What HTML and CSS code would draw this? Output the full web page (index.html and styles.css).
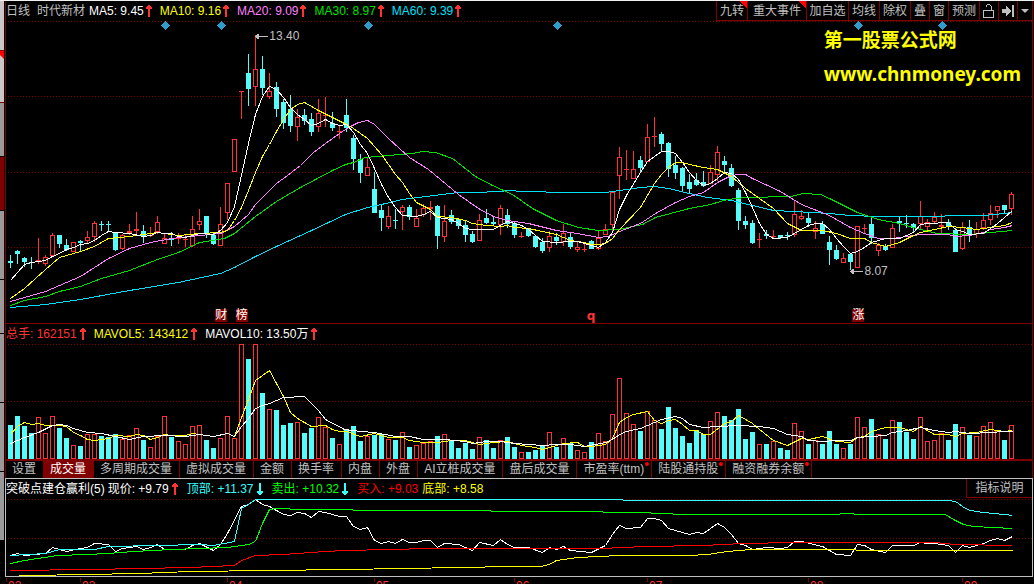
FILE: index.html
```html
<!DOCTYPE html>
<html lang="zh-CN">
<head>
<meta charset="utf-8">
<title>时代新材 日线</title>
<link rel="stylesheet" href="styles.css">
</head>
<body>
<svg class="defs" aria-hidden="true">
  <symbol id="up" viewBox="0 0 6 12"><path d="M2 0h2v1h1v1h1v2H4v8H2V4H0V2h1V1h1z" fill="currentColor"/></symbol>
  <symbol id="down" viewBox="0 0 6 12"><path d="M2 12h2v-1h1v-1h1V8H4V0H2v8H0v2h1v1h1z" fill="currentColor"/></symbol>
</svg>
<div class="app">
  <nav class="rail">
    <span class="rail-item light first"></span>
    <span class="rail-item light flagged"></span>
    <span class="rail-item"></span>
    <span class="rail-item current"></span>
    <span class="rail-item tall"></span>
    <span class="rail-item"></span>
    <span class="rail-item tall"></span>
    <span class="rail-item tall"></span>
    <span class="rail-item tall"></span>
  </nav>
  <main class="main">
    <section class="price">
      <header class="top">
        <div class="legend averages">
          <span class="muted period">日线</span>
          <span class="muted stock">时代新材</span>
          <span class="item white">MA5: 9.45<svg class="arrow rise"><use href="#up"/></svg></span>
          <span class="item yellow">MA10: 9.16<svg class="arrow rise"><use href="#up"/></svg></span>
          <span class="item pink">MA20: 9.09<svg class="arrow rise"><use href="#up"/></svg></span>
          <span class="item green">MA30: 8.97<svg class="arrow rise"><use href="#up"/></svg></span>
          <span class="item aqua">MA60: 9.39<svg class="arrow rise"><use href="#up"/></svg></span>
        </div>
        <div class="toolbar">
          <button class="tool c2 corner">九转</button>
          <button class="tool c4 corner">重大事件</button>
          <button class="tool c3">加自选</button>
          <button class="tool c2">均线</button>
          <button class="tool c2">除权</button>
          <button class="tool c1">叠</button>
          <button class="tool c1">窗</button>
          <button class="tool c2">预测</button>
          <button class="tool c1" aria-label="锁定"><svg width="12" height="14" viewBox="0 0 12 14" fill="none" stroke="#c0c0c0" shape-rendering="crispEdges"><path d="M.5 6.500h10v7H.5zM8.500 6V2.500L7.500 1.500L6.500 .5H5L3.500 1.500V3" /></svg></button>
          <button class="tool c1" aria-label="移到最新"><svg width="12" height="12" viewBox="0 0 12 12" fill="#c0c0c0" shape-rendering="crispEdges"><path d="M0 4h4V1h1v1h1v1h1v1h1v1h1v2H8v1H7v1H6v1H5v1H4V8H0zM10 0h2v12h-2z"/></svg></button>
          <button class="tool c0" aria-label="更多"><svg width="8" height="4" viewBox="0 0 8 4" fill="#c0c0c0"><path d="M0 0h8L4 4z"/></svg></button>
        </div>
      </header>
      <div class="plot">
        <svg id="price-chart" class="chart price-chart" viewBox="6 21 1026 302" preserveAspectRatio="none"></svg>
        <div class="watermark"><p>第一股票公式网</p><p>www.chnmoney.com</p></div>
        <div class="mark high"><svg width="13" height="7" viewBox="0 0 13 7" fill="#c0c0c0" shape-rendering="crispEdges"><path d="M0 3h1V2h1V1h2v2h9v1H4v2H2V5H1V4H0z"/></svg>13.40</div>
        <div class="mark low"><svg width="13" height="7" viewBox="0 0 13 7" fill="#c0c0c0" shape-rendering="crispEdges"><path d="M0 3h1V2h1V1h2v2h9v1H4v2H2V5H1V4H0z"/></svg>8.07</div>
        <span class="badge cai">财</span>
        <span class="badge bang">榜</span>
        <span class="letter">q</span>
        <span class="badge zhang">涨</span>
      </div>
    </section>
    <section class="volume">
      <div class="legend">
        <span class="item rise">总手: 162151<svg class="arrow rise"><use href="#up"/></svg></span>
        <span class="item yellow">MAVOL5: 143412<svg class="arrow rise"><use href="#up"/></svg></span>
        <span class="item white">MAVOL10: 13.50万<svg class="arrow rise"><use href="#up"/></svg></span>
      </div>
      <svg id="volume-chart" class="chart volume-chart" viewBox="6 344 1026 115" preserveAspectRatio="none"></svg>
      <nav class="tabs">
        <button class="tab">设置</button>
        <button class="tab active">成交量</button>
        <button class="tab">多周期成交量</button>
        <button class="tab">虚拟成交量</button>
        <button class="tab">金额</button>
        <button class="tab">换手率</button>
        <button class="tab">内盘</button>
        <button class="tab">外盘</button>
        <button class="tab">AI立桩成交量</button>
        <button class="tab">盘后成交量</button>
        <button class="tab dot">市盈率(ttm)</button>
        <button class="tab dot">陆股通持股</button>
        <button class="tab dot">融资融券余额</button>
      </nav>
    </section>
    <section class="signal">
      <header class="top">
        <div class="legend tight">
          <span class="white">突破点建仓赢利(5)</span>
          <span class="item white">现价: +9.79<svg class="arrow rise"><use href="#up"/></svg></span>
          <span class="item cyan">顶部: +11.37<svg class="arrow"><use href="#down"/></svg></span>
          <span class="item lime">卖出: +10.32<svg class="arrow cyan"><use href="#down"/></svg></span>
          <span class="item red">买入: +9.03</span>
          <span class="yellow">底部: +8.58</span>
        </div>
        <button class="explain">指标说明</button>
      </header>
      <svg id="signal-chart" class="chart signal-chart" viewBox="6 498 1026 78" preserveAspectRatio="none"></svg>
    </section>
    <div id="axis" class="axis"></div>
  </main>
</div>
<script src="charts.js"></script>
</body>
</html>
```
FILE: styles.css
```css
* { box-sizing: border-box; }
body {
  margin: 0;
  height: 100vh;
  overflow: hidden;
  background: #000;
  color: #c0c0c0;
  font: 12px/18px "Liberation Sans", "Noto Sans CJK SC", sans-serif;
}
p { margin: 0; }
button {
  margin: 0;
  padding: 0;
  border: 0;
  background: none;
  color: inherit;
  font: inherit;
  white-space: nowrap;
}
.defs { position: absolute; width: 0; height: 0; }
.app { display: flex; height: 100%; border-top: 1px solid #f0f0f0; }

.rail { flex: none; width: 5px; padding-right: 1px; }
.rail-item {
  display: block;
  height: 54px;
  background: #999;
  border-bottom: 1px solid #000;
}
.rail-item.light { height: 52px; background: #c8c8c8; border-color: #800000; }
.rail-item.first { height: 50px; }
.rail-item.current { background: #800000; }
.rail-item.tall { height: 69px; }
.rail-item.flagged::before {
  content: "";
  display: block;
  height: 8px;
  background: #f00;
  clip-path: polygon(0 0, 100% 0, 100% 100%, 0 50%);
}

.main { flex: 1; min-width: 0; margin-right: 1px; }
.price, .volume { border: solid #800000; border-width: 0 1px; }
.price { border-bottom-width: 1px; }
.top { display: flex; justify-content: space-between; height: 20px; }
.legend { display: flex; gap: 8px; height: 20px; line-height: 20px; white-space: nowrap; }
.legend.averages .arrow { margin-left: 2px; }
.legend.tight { gap: 9px; height: 19px; }
.legend.tight > :first-child { margin-right: -6px; }
.legend.tight .red { margin-right: -5px; }
.item { display: flex; align-items: center; }
.period { margin-right: -1px; }
.stock { margin-right: -4px; }
.arrow { width: 6px; height: 12px; margin-left: 3px; shape-rendering: crispEdges; }

.muted { color: #c0c0c0; }
.white { color: #fff; }
.yellow { color: #ff0; }
.pink { color: #ff80ff; }
.green { color: #00e000; }
.aqua { color: #00e0f8; }
.rise { color: #ff3232; }
.cyan { color: #3ff; }
.lime { color: #0f0; }
.red { color: #f00; }

.toolbar { display: flex; border-bottom: 1px solid #800000; }
.tool {
  display: flex;
  align-items: center;
  justify-content: center;
  border-left: 1px solid #800000;
  overflow: hidden;
}
.c0 { width: 15px; }
.c1 { width: 19px; }
.c2 { width: 31px; }
.c3 { width: 42px; }
.c4 { width: 59px; }
.corner { background: linear-gradient(225deg, #f00 0 5px, transparent 5px); }

.plot { position: relative; }
.chart { display: block; width: 100%; shape-rendering: crispEdges; }
.price-chart { height: 302px; }
.volume-chart { height: 115px; }
.signal-chart { height: 78px; }
.watermark {
  position: absolute;
  top: 2px;
  right: 11px;
  color: #ff0;
  font: bold 19px/34px "Noto Sans", "Noto Sans CJK SC", sans-serif;
}
.mark { position: absolute; display: flex; align-items: center; gap: 1px; }
.high { left: 24.300%; top: 6px; }
.low { left: 82.300%; top: 241px; }
.badge {
  position: absolute;
  top: 288px;
  width: 12px;
  height: 13px;
  background: #800000;
  color: #fff;
  line-height: 13px;
}
.cai { left: 20.400%; }
.bang { left: 22.400%; }
.zhang { left: 82.500%; }
.letter {
  position: absolute;
  top: 286px;
  left: 56.600%;
  color: #ff3232;
  font: bold 12px/18px "DejaVu Sans", sans-serif;
}

.tabs { display: flex; height: 19px; border-top: 2px solid #800000; line-height: 17px; }
.tab {
  position: relative;
  padding: 0 7px 0 6px;
  border-right: 1px solid #800000;
}
.tab.active { background: #800000; color: #fff; }
.tab.dot::after {
  content: "";
  position: absolute;
  top: 1px;
  right: 2px;
  width: 4px;
  height: 4px;
  border-radius: 2px;
  background: #f00;
}

.signal { border: 1px solid #c0c0c0; }
.signal .top { height: 19px; }
.explain {
  width: 66px;
  border: solid #800000;
  border-width: 0 0 1px 1px;
}
.axis { position: relative; height: 20px; }
.date {
  position: absolute;
  top: 0;
  padding-left: 2px;
  color: #ff3232;
}
.date::before {
  content: "";
  position: absolute;
  left: 0;
  top: 1px;
  width: 1px;
  height: 4px;
  background: #800000;
}
```
FILE: charts.js
```js
const STEP = 7, FIRST = 10, UP = '#ff3232', DOWN = '#54fcfc';

// One candle per entry: direction, high, low, body top, body bottom.
const candles = `
b255,268,261,263 b250,264,251,254 b257,267,258,262 b257,269,262,263 r238,264,260,261 r255,266,257,264
r233,256,235,256 b235,248,235,244 b239,251,245,250 r242,252,242,252 b240,252,241,243 r231,243,237,241
r221,242,223,237 b221,231,224,225 b221,232,224,225 b232,251,232,250 r234,250,235,249 r224,235,231,233
r212,236,229,231 b225,243,231,237 r227,237,235,236 r216,234,222,232 r233,244,238,244 b232,246,239,240
r233,244,238,239 r234,247,239,240 r216,247,229,246 r209,230,221,225 b216,238,216,233 b232,245,235,244
r207,246,224,246 r183,220,183,213 r139,172,139,172 r91,119,91,92 b54,106,73,89 r35,106,69,87
b56,95,69,88 r73,99,91,97 b82,117,87,109 b99,129,102,123 b95,132,109,126 r109,141,117,127
b109,125,115,121 b113,136,119,132 r99,132,113,127 r97,127,115,116 b112,131,123,128 r125,139,131,132
b99,132,115,128 b135,170,138,159 b154,183,159,173 r158,176,167,176 b172,213,189,213 b205,231,210,218
r206,229,216,227 b209,229,220,221 r205,230,207,212 b205,220,207,217 r209,227,218,227 r204,217,208,215
r201,220,207,209 b205,249,206,236 r205,242,221,237 b210,224,215,222 b218,229,219,226 b220,242,225,235
b231,243,234,242 r214,241,220,241 b209,224,218,223 b216,225,222,224 r205,235,208,225 b209,228,215,224
b222,238,223,235 r232,238,236,237 b228,237,229,236 b235,248,236,247 b238,253,242,251 r231,252,236,248
b233,245,237,241 r224,246,233,242 b233,249,237,247 r242,252,247,250 r243,252,249,250 b240,249,241,249
r231,250,238,249 r224,235,229,235 r192,231,192,225 r147,199,157,176 r150,180,169,170 r151,179,169,179
b156,172,160,168 r124,162,137,162 r117,147,136,137 b132,152,134,144 b142,177,143,169 b156,179,165,173
b167,192,168,186 b174,194,182,189 b173,186,180,185 b171,187,182,186 r165,184,172,184 r146,181,152,175
b156,172,161,165 b164,187,168,186 b188,230,190,221 b216,229,221,225 b220,244,223,243 r233,248,239,240
b230,239,234,236 r230,239,236,237 b235,239,235,238 b232,240,235,236 r201,237,214,235 r210,220,216,219
b212,227,218,223 r221,239,228,232 b221,234,224,234 b236,265,242,250 b245,260,250,259 r253,263,258,263
b253,270,254,262 r226,268,226,268 r224,234,228,229 b218,244,224,238 r243,256,245,251 b244,251,246,250
r224,248,228,248 b217,232,221,223 b215,228,223,224 b223,233,224,228 r201,229,216,224 r219,230,222,227
r212,223,217,222 r214,233,225,227 b219,230,222,227 b228,252,230,252 r222,250,227,249 b220,242,227,234
r222,238,229,234 r213,230,220,228 r205,225,213,220 r206,218,206,211 b205,213,205,210 r192,215,194,209`
  .trim().split(/\s+/).map(t => ({ rising: t[0] === 'r', v: t.slice(1).split(',').map(Number) }));

const volumeTops = [
  425,416,426,433,417,433,416,428,438,445,446,434,434,436,437,434,439,435,428,440,447,436,416,437,
  441,444,426,425,440,448,438,416,438,344,359,344,393,409,410,425,423,422,433,428,417,427,438,444,
  430,426,441,436,435,434,439,440,432,447,445,443,441,436,434,440,448,443,449,437,440,448,440,437,
  447,452,452,450,446,432,447,438,443,450,452,442,433,441,414,378,413,424,431,411,420,429,407,428,
  436,443,430,434,421,412,416,420,409,439,432,444,444,441,448,450,423,431,444,440,444,431,444,448,
  444,417,427,419,434,439,420,422,432,439,417,441,440,433,440,424,427,435,436,426,422,431,440,425];

const priceLines = [
  ['#00e0f8', '10,307 45,304 80,299 129,290 178,282 220,273 234,267 255,256 276,246 311,230 345,214 367,207 381,204 402,199 425,196 458,192 478,192 512,190 518,191 572,192 605,192 619,190 640,187 654,186 668,188 689,193 707,197 731,200 752,205 773,210 794,211 829,213 850,215 877,216 920,216 969,215 983,215 1004,213 1012,212'],
  ['#00e000', '10,305 24,300 45,296 59,291 80,286 101,278 129,270 157,259 178,252 199,242 224,238 234,233 255,216 276,201 300,187 332,170 345,164 353,162 365,157 388,155 412,153 422,151 435,152 452,158 475,176 492,185 512,194 532,208 556,220 578,227 598,230 618,229 642,224 655,217 689,208 710,204 727,199 745,197 790,196 803,193 820,194 829,198 857,212 878,219 899,223 920,229 937,233 969,234 990,232 1012,230'],
  ['#ff80ff', '10,301 45,291 59,285 80,276 108,258 129,248 150,242 171,238 199,235 220,233 234,226 248,214 255,204 276,183 287,175 300,165 313,152 325,143 339,133 348,127 358,122 367,120 374,124 388,138 409,157 428,169 458,194 478,208 493,216 507,220 528,223 556,230 577,233 598,237 608,236 619,231 640,223 655,213 675,202 689,196 703,192 717,182 731,175 738,174 745,174 752,178 780,191 801,204 829,215 850,227 864,233 878,238 892,238 920,234 948,234 955,236 969,235 983,232 990,229 1004,227 1012,225'],
  ['#ffff00', '10,298 24,288 45,269 59,257 80,251 94,246 108,238 129,236 143,234 157,232 178,235 199,233 220,232 227,230 234,220 241,207 248,190 255,172 262,156 269,144 276,131 283,119 290,109 297,104 304,102 311,106 318,110 332,117 346,124 353,128 367,138 381,154 395,174 402,182 409,193 416,202 430,209 437,216 451,217 465,220 472,223 486,225 500,226 507,225 514,227 528,228 542,231 556,234 570,240 584,242 591,244 598,244 605,243 612,238 619,229 640,207 654,183 661,174 668,167 675,162 682,162 689,164 703,167 717,169 731,176 745,188 759,198 773,208 787,223 801,230 822,230 836,233 850,238 864,238 871,242 885,246 899,242 913,235 920,232 934,229 948,226 962,227 976,229 990,227 1004,225 1012,222'],
  ['#ffffff', '10,280 24,264 31,262 45,260 52,256 59,253 66,249 73,247 80,244 87,243 94,240 101,235 108,231 115,232 129,233 143,236 150,235 157,232 164,233 171,233 178,236 185,237 192,235 199,233 213,234 220,230 227,222 234,206 242,170 248,143 255,114 262,96 269,86 276,89 283,97 290,107 297,114 304,119 311,125 318,123 325,119 332,123 339,125 346,124 353,132 360,144 367,153 374,168 381,184 388,197 395,207 402,215 416,216 423,214 430,211 437,217 451,219 458,223 465,228 472,229 493,229 500,225 507,221 514,223 521,225 528,229 535,235 542,241 556,242 570,241 577,241 584,243 598,247 605,242 612,232 619,209 626,195 640,172 647,161 654,156 661,151 668,151 675,153 682,162 689,172 696,180 703,185 710,183 717,178 724,172 731,173 738,179 745,192 752,207 759,223 766,234 773,238 787,237 794,233 801,229 808,225 815,223 822,223 829,229 836,238 843,246 850,253 857,251 864,247 871,242 885,238 899,238 906,235 913,232 920,224 927,223 948,222 955,229 962,231 969,234 983,233 990,228 997,223 1004,217 1012,210']
];

const volumeLines = [
  ['#ffff00', '10,434 17,426 24,422 31,424 38,423 45,425 59,425 66,426 73,432 80,435 87,439 94,440 108,438 115,435 129,436 136,434 143,435 150,439 157,437 164,434 171,435 185,435 192,433 199,434 213,436 227,433 234,436 255,380 269,370 283,396 290,412 297,418 311,426 325,425 332,429 339,431 346,431 360,436 374,433 388,437 402,437 409,440 423,442 437,442 451,440 465,440 479,444 493,442 507,441 521,445 535,447 542,449 549,447 563,443 577,442 584,446 591,446 605,444 612,438 619,422 626,417 633,414 647,411 654,420 661,423 668,420 675,419 682,424 689,430 696,430 703,434 710,434 724,423 731,421 738,415 752,423 759,429 773,440 787,445 801,438 808,439 822,436 836,441 850,442 857,437 864,436 871,431 885,427 899,427 913,431 920,426 934,434 948,434 955,436 962,433 976,432 990,429 1004,431 1012,430'],
  ['#ffffff', '10,443 24,437 38,432 52,425 59,424 66,425 73,428 87,432 101,433 115,436 129,439 143,436 164,435 185,436 199,434 213,436 227,433 234,436 241,426 248,418 255,408 262,405 269,403 283,397 304,396 318,410 325,419 344,429 360,431 374,432 395,436 409,436 423,439 444,439 465,441 472,443 486,441 500,441 514,443 542,445 556,444 570,444 584,446 605,442 612,439 619,434 626,431 640,428 654,422 661,419 675,416 682,418 689,424 703,427 717,426 738,425 759,426 773,428 787,434 801,436 808,440 822,441 836,440 850,440 857,437 871,436 885,435 892,432 906,430 920,427 934,430 948,432 955,431 969,433 990,432 1004,431 1012,431']
];

const signalLines = [
  ['#ffffff', '10,555 17,553 24,555 45,553 52,547 66,551 80,548 87,547 94,543 108,544 115,551 122,548 136,546 143,549 150,547 157,544 164,549 185,549 192,545 199,543 213,550 220,544 227,533 241,506 248,504 255,499 262,504 269,506 283,514 290,515 297,512 304,513 311,517 318,511 325,512 339,516 346,516 353,526 360,529 367,527 374,540 381,543 388,541 395,543 402,539 409,542 416,542 423,540 430,540 437,547 444,543 458,544 472,550 479,542 493,545 500,539 507,544 514,547 528,547 542,552 549,547 556,549 563,546 570,550 591,552 605,545 612,534 619,525 626,528 640,527 647,518 654,518 661,520 668,528 689,534 696,532 703,533 717,523 724,527 731,534 738,543 745,545 752,549 766,547 780,548 787,547 794,541 801,541 822,546 836,554 850,555 857,544 864,545 871,549 885,552 892,545 913,545 920,542 927,543 934,543 948,545 955,552 962,545 969,547 983,543 990,540 997,538 1004,540 1012,536'],
  ['#33ffff', '10,555 45,553 59,549 94,549 108,546 157,545 199,544 213,545 234,541 241,508 248,504 255,499 622,499 623,500 950,500 957,502 963,507 970,510 983,512 1004,514 1012,515'],
  ['#00ff00', '10,563 24,560 57,555 87,554 107,553 133,551 171,549 227,547 248,544 255,541 262,523 269,509 276,508 302,509 345,509 360,510 490,510 491,511 602,511 603,512 650,512 651,513 693,514 839,514 840,513 853,513 854,514 945,514 953,519 963,524 973,526 1012,528'],
  ['#ff0000', '10,570 90,569 190,567 234,565 241,560 255,555 283,554 325,551 345,550 430,548 600,548 645,546 703,545 722,544 743,543 794,542 934,542 955,544 1012,545'],
  ['#ffff00', '10,576 28,575 85,574 139,573 190,571 345,569 460,567 510,566 540,566 549,564 556,560 577,557 619,555 689,555 707,554 727,551 750,549 850,549 860,550 1012,550']
];

const rect = (x, y, w, h, fill) => `<rect x="${x}" y="${y}" width="${w}" height="${h}" fill="${fill}"/>`;
const grid = rows => rows.map(y => `<path d="M8 ${y + .5}H1032" stroke="#800000" stroke-dasharray="1 2"/>`).join('');
const lines = list => list.map(([color, points]) =>
  `<polyline points="${points}" transform="translate(.5 .5)" fill="none" stroke="${color}"/>`).join('');
const box = (x, top, bottom) =>
  `<rect x="${x - 1.5}" y="${top + .5}" width="4" height="${bottom - top - 1}" fill="#000" stroke="${UP}"/>`;

function candle({ rising, v: [high, low, top, bottom] }, i) {
  const x = FIRST + STEP * i;
  const color = rising ? UP : DOWN;
  const wick = rect(x, high, 1, low - high, color);
  const body = rising && bottom - top > 2 ? box(x, top, bottom) : rect(x - 2, top, 5, bottom - top, color);
  return wick + body;
}

function volumeBar(top, i) {
  const x = FIRST + STEP * i;
  return candles[i].rising ? box(x, top, 459) : rect(x - 2, top, 5, 459 - top, DOWN);
}

const diamonds = [165, 221, 368, 557, 858, 942].map(x =>
  `<path d="M${x + .5} 21l4.500 4.500l-4.500 4.500l-4.500-4.500z" fill="#2f9dcb"/>`).join('');

document.getElementById('price-chart').innerHTML =
  grid([21, 96, 172, 247]) + diamonds + candles.map(candle).join('') + lines(priceLines);
document.getElementById('volume-chart').innerHTML =
  grid([344, 401]) + volumeTops.map(volumeBar).join('') + lines(volumeLines);
document.getElementById('signal-chart').innerHTML = grid([499, 538]) + lines(signalLines);

const dates = [['02', 6], ['03', 80], ['04', 227], ['05', 374], ['06', 514], ['07', 647], ['08', 808], ['09', 962]];
document.getElementById('axis').innerHTML = dates.map(([label, x]) =>
  `<span class="date" style="left:${((x - 5) / 1028 * 100).toFixed(2)}%">${label}</span>`).join('');
```
